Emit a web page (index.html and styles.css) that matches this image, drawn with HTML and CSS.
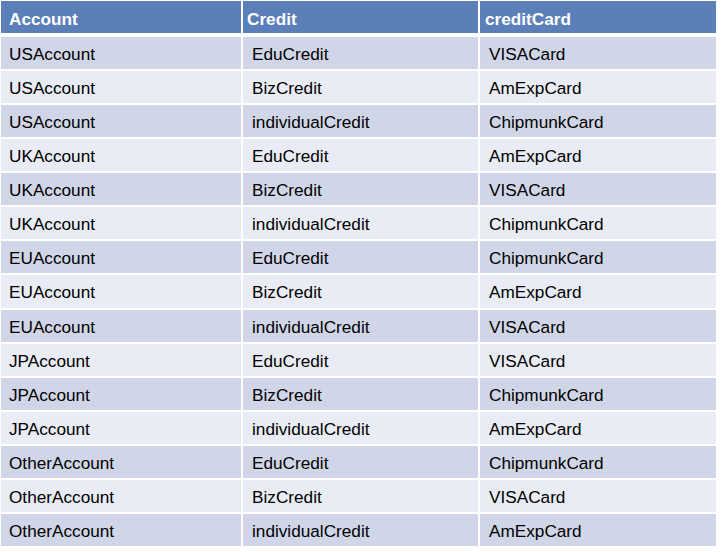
FILE: index.html
```html
<!DOCTYPE html>
<html>
<head>
<meta charset="utf-8">
<link rel="stylesheet" href="styles.css">
</head>
<body>
<div class="table">
  <div class="row head">
    <div class="cell c1">Account</div>
    <div class="cell c2">Credit</div>
    <div class="cell c3">creditCard</div>
  </div>
  <div class="row dark"><div class="cell c1">USAccount</div><div class="cell c2">EduCredit</div><div class="cell c3">VISACard</div></div>
  <div class="row light"><div class="cell c1">USAccount</div><div class="cell c2">BizCredit</div><div class="cell c3">AmExpCard</div></div>
  <div class="row dark"><div class="cell c1">USAccount</div><div class="cell c2">individualCredit</div><div class="cell c3">ChipmunkCard</div></div>
  <div class="row light"><div class="cell c1">UKAccount</div><div class="cell c2">EduCredit</div><div class="cell c3">AmExpCard</div></div>
  <div class="row dark"><div class="cell c1">UKAccount</div><div class="cell c2">BizCredit</div><div class="cell c3">VISACard</div></div>
  <div class="row light"><div class="cell c1">UKAccount</div><div class="cell c2">individualCredit</div><div class="cell c3">ChipmunkCard</div></div>
  <div class="row dark"><div class="cell c1">EUAccount</div><div class="cell c2">EduCredit</div><div class="cell c3">ChipmunkCard</div></div>
  <div class="row light"><div class="cell c1">EUAccount</div><div class="cell c2">BizCredit</div><div class="cell c3">AmExpCard</div></div>
  <div class="row dark"><div class="cell c1">EUAccount</div><div class="cell c2">individualCredit</div><div class="cell c3">VISACard</div></div>
  <div class="row light"><div class="cell c1">JPAccount</div><div class="cell c2">EduCredit</div><div class="cell c3">VISACard</div></div>
  <div class="row dark"><div class="cell c1">JPAccount</div><div class="cell c2">BizCredit</div><div class="cell c3">ChipmunkCard</div></div>
  <div class="row light"><div class="cell c1">JPAccount</div><div class="cell c2">individualCredit</div><div class="cell c3">AmExpCard</div></div>
  <div class="row dark"><div class="cell c1">OtherAccount</div><div class="cell c2">EduCredit</div><div class="cell c3">ChipmunkCard</div></div>
  <div class="row light"><div class="cell c1">OtherAccount</div><div class="cell c2">BizCredit</div><div class="cell c3">VISACard</div></div>
  <div class="row dark"><div class="cell c1">OtherAccount</div><div class="cell c2">individualCredit</div><div class="cell c3">AmExpCard</div></div>
</div>
</body>
</html>
```
FILE: styles.css
```css
html, body {
  margin: 0;
  padding: 0;
  background: #ffffff;
}
body {
  font-family: "Liberation Sans", Arial, sans-serif;
  font-size: 17.2px;
  color: #000000;
}
.table {
  margin: 1px 0 0 1px;
  display: flex;
  flex-direction: column;
  gap: 2px;
  width: 715px;
}
.row {
  display: grid;
  grid-template-columns: 240px 235px 236px;
  column-gap: 2px;
  height: 32.14px;
}
.cell {
  line-height: 32px;
  padding-top: 1px;
  white-space: nowrap;
  overflow: hidden;
}
.head {
  height: 31.5px;
  margin-bottom: 2px;
}
.head .cell {
  background: #5b80b9;
  color: #ffffff;
  font-weight: bold;
  line-height: 31px;
  padding-top: 3px;
}
.dark .cell { background: #d0d6e7; }
.light .cell { background: #e9ecf4; }
.c1 { padding-left: 8px; }
.c2 { padding-left: 9px; }
.c3 { padding-left: 9px; }
.head .c2 { padding-left: 4px; }
.head .c3 { padding-left: 5px; }
```
